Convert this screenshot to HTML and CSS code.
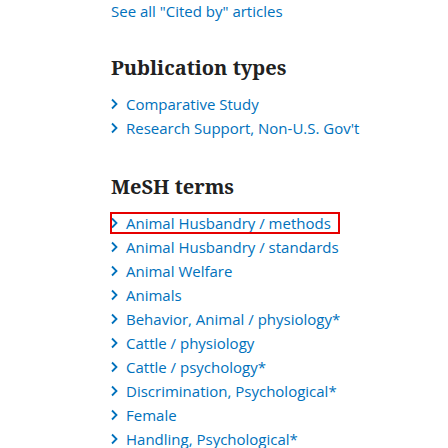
FILE: index.html
```html
<!DOCTYPE html>
<html>
<head>
<meta charset="utf-8">
<link rel="stylesheet" href="styles.css">
</head>
<body>
<div class="page">
  <a class="see-all" href="#">See all "Cited by" articles</a>
  <section class="sec pub">
    <h2 class="title">Publication types</h2>
    <ul class="list">
      <li><a href="#"><svg class="chev" width="16" height="12" viewBox="0 0 16 12"><path d="M2 1.5 L6.5 6 L2 10.5" fill="none" stroke="#0071bc" stroke-width="1.8"/></svg>Comparative Study</a></li>
      <li><a href="#"><svg class="chev" width="16" height="12" viewBox="0 0 16 12"><path d="M2 1.5 L6.5 6 L2 10.5" fill="none" stroke="#0071bc" stroke-width="1.8"/></svg>Research Support, Non-U.S. Gov't</a></li>
    </ul>
  </section>
  <section class="sec mesh">
    <h2 class="title">MeSH terms</h2>
    <ul class="list">
      <li><a class="focused" href="#"><svg class="chev" width="16" height="12" viewBox="0 0 16 12"><path d="M2 1.5 L6.5 6 L2 10.5" fill="none" stroke="#0071bc" stroke-width="1.8"/></svg>Animal Husbandry / methods</a></li>
      <li><a href="#"><svg class="chev" width="16" height="12" viewBox="0 0 16 12"><path d="M2 1.5 L6.5 6 L2 10.5" fill="none" stroke="#0071bc" stroke-width="1.8"/></svg>Animal Husbandry / standards</a></li>
      <li><a href="#"><svg class="chev" width="16" height="12" viewBox="0 0 16 12"><path d="M2 1.5 L6.5 6 L2 10.5" fill="none" stroke="#0071bc" stroke-width="1.8"/></svg>Animal Welfare</a></li>
      <li><a href="#"><svg class="chev" width="16" height="12" viewBox="0 0 16 12"><path d="M2 1.5 L6.5 6 L2 10.5" fill="none" stroke="#0071bc" stroke-width="1.8"/></svg>Animals</a></li>
      <li><a href="#"><svg class="chev" width="16" height="12" viewBox="0 0 16 12"><path d="M2 1.5 L6.5 6 L2 10.5" fill="none" stroke="#0071bc" stroke-width="1.8"/></svg>Behavior, Animal / physiology*</a></li>
      <li><a href="#"><svg class="chev" width="16" height="12" viewBox="0 0 16 12"><path d="M2 1.5 L6.5 6 L2 10.5" fill="none" stroke="#0071bc" stroke-width="1.8"/></svg>Cattle / physiology</a></li>
      <li><a href="#"><svg class="chev" width="16" height="12" viewBox="0 0 16 12"><path d="M2 1.5 L6.5 6 L2 10.5" fill="none" stroke="#0071bc" stroke-width="1.8"/></svg>Cattle / psychology*</a></li>
      <li><a href="#"><svg class="chev" width="16" height="12" viewBox="0 0 16 12"><path d="M2 1.5 L6.5 6 L2 10.5" fill="none" stroke="#0071bc" stroke-width="1.8"/></svg>Discrimination, Psychological*</a></li>
      <li><a href="#"><svg class="chev" width="16" height="12" viewBox="0 0 16 12"><path d="M2 1.5 L6.5 6 L2 10.5" fill="none" stroke="#0071bc" stroke-width="1.8"/></svg>Female</a></li>
      <li><a href="#"><svg class="chev" width="16" height="12" viewBox="0 0 16 12"><path d="M2 1.5 L6.5 6 L2 10.5" fill="none" stroke="#0071bc" stroke-width="1.8"/></svg>Handling, Psychological*</a></li>
    </ul>
  </section>
</div>
</body>
</html>
```
FILE: styles.css
```css
html, body {
  margin: 0;
  padding: 0;
  background: #fff;
}
.page {
  padding: 0 0 0 110px;
  font-family: "Open Sans", "Noto Sans", sans-serif;
  font-size: 15px;
  color: #212121;
}
a {
  color: #0071bc;
  text-decoration: none;
}
.see-all {
  display: block;
  padding-left: 1px;
  line-height: 22px;
}
.sec {
  margin: 0;
}
.pub {
  margin-top: 30px;
}
.mesh {
  margin-top: 31px;
}
.title {
  margin: 0 0 8px 1px;
  font-family: "Noto Serif", "DejaVu Serif", serif;
  font-weight: bold;
  font-size: 20px;
  line-height: 32px;
  color: #212121;
}
.list {
  list-style: none;
  margin: 0;
  padding: 0;
}
.list li {
  display: flex;
  align-items: center;
  height: 24px;
}
.list a {
  display: inline-flex;
  align-items: center;
  height: 22px;
  padding: 0 9px 0 0;
  box-sizing: border-box;
  white-space: nowrap;
}
.chev {
  flex: none;
}
.focused {
  outline: 2px solid #e60000;
  outline-offset: -2px;
}
```
